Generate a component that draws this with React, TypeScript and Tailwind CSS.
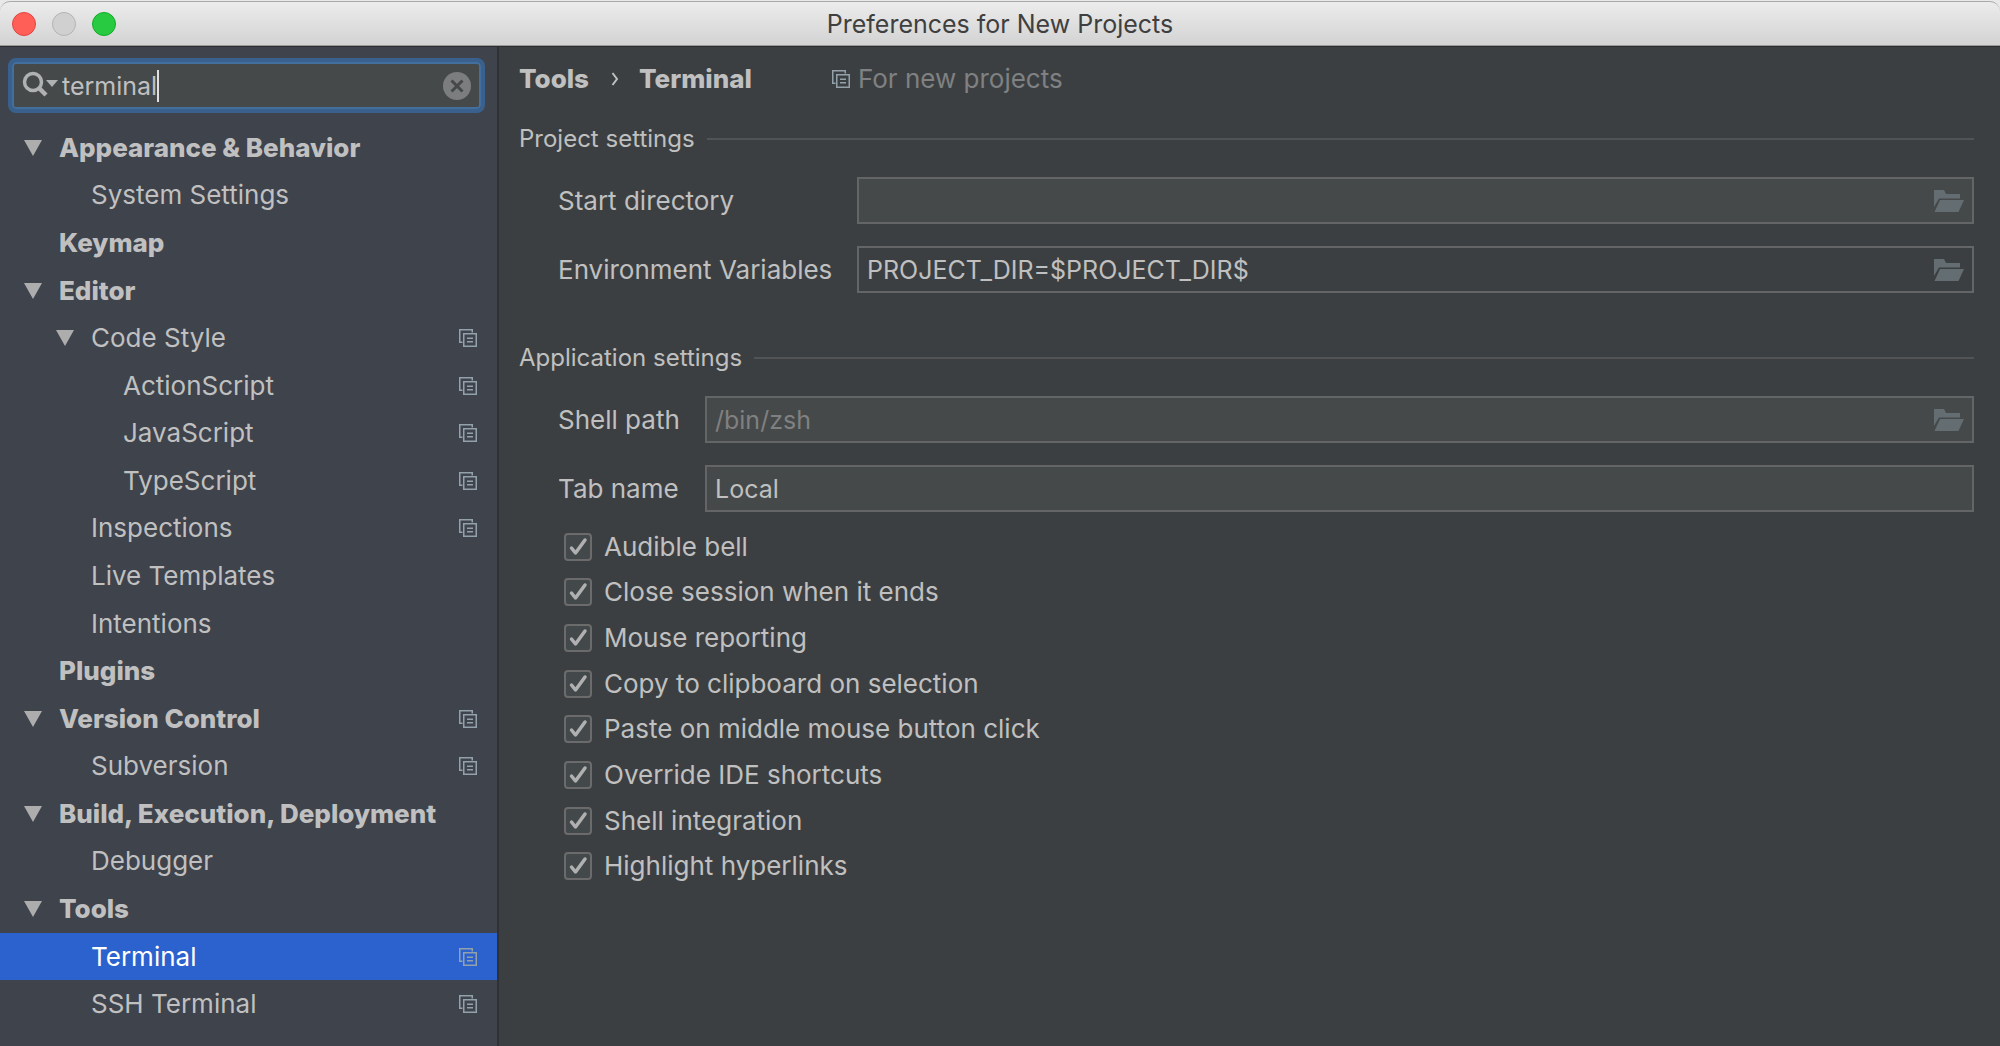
import React, { useState } from 'react';

type Row = { label: string; level: number; open?: boolean; shared?: boolean };

const rows: Row[] = [
  { label: 'Appearance & Behavior', level: 0, open: true },
  { label: 'System Settings', level: 1 },
  { label: 'Keymap', level: 0 },
  { label: 'Editor', level: 0, open: true },
  { label: 'Code Style', level: 1, open: true, shared: true },
  { label: 'ActionScript', level: 2, shared: true },
  { label: 'JavaScript', level: 2, shared: true },
  { label: 'TypeScript', level: 2, shared: true },
  { label: 'Inspections', level: 1, shared: true },
  { label: 'Live Templates', level: 1 },
  { label: 'Intentions', level: 1 },
  { label: 'Plugins', level: 0 },
  { label: 'Version Control', level: 0, open: true, shared: true },
  { label: 'Subversion', level: 1, shared: true },
  { label: 'Build, Execution, Deployment', level: 0, open: true },
  { label: 'Debugger', level: 1 },
  { label: 'Tools', level: 0, open: true },
  { label: 'Terminal', level: 1, shared: true },
  { label: 'SSH Terminal', level: 1, shared: true },
];

const options = [
  'Audible bell',
  'Close session when it ends',
  'Mouse reporting',
  'Copy to clipboard on selection',
  'Paste on middle mouse button click',
  'Override IDE shortcuts',
  'Shell integration',
  'Highlight hyperlinks',
];

const indents = ['pl-6', 'pl-14', 'pl-[88px]'];

function SharedIcon() {
  return (
    <svg className="h-[18px] w-[18px] shrink-0" viewBox="0 0 18 18" fill="none" stroke="#93a1ab" strokeWidth="1.5" aria-hidden="true">
      <path d="M3.5 13.25H.75V.75h12.5v2.75" />
      <path d="M4.75 4.75h12.5v12.5H4.75z" />
      <path d="M8 9.25h6M8 12.75h6" />
    </svg>
  );
}

function FolderIcon() {
  return (
    <svg className="h-[22px] w-[30px]" viewBox="0 0 30 22" fill="#646d71" aria-hidden="true">
      <path d="M0 0h10l2 4h14v4.500H5L0 17z" />
      <path d="M6 10h24l-5.500 12H.5z" />
    </svg>
  );
}

function Section({ title, children }: { title: string; children: React.ReactNode }) {
  return (
    <section>
      <div className="flex items-center gap-3">
        <h2 className="text-2xl leading-8">{title}</h2>
        <div className="h-[2px] flex-1 bg-[#515355]" />
      </div>
      {children}
    </section>
  );
}

function Field(props: {
  id: string;
  label: string;
  labelClass: string;
  value: string;
  placeholder?: string;
  fill: string;
  browse?: boolean;
}) {
  const [value, setValue] = useState(props.value);
  return (
    <div className="flex items-center pl-[39px]">
      <label htmlFor={props.id} className={'shrink-0 ' + props.labelClass}>
        {props.label}
      </label>
      <div className={'flex h-[47px] min-w-0 flex-1 items-center border-2 border-[#646566] px-2 text-[25px] ' + props.fill}>
        <input
          id={props.id}
          type="text"
          value={value}
          placeholder={props.placeholder}
          onChange={(e) => setValue(e.target.value)}
          className="min-w-0 flex-1 bg-transparent outline-none placeholder:text-[#808080]"
        />
        {props.browse && (
          <button type="button" aria-label={'Browse ' + props.label} className="shrink-0">
            <FolderIcon />
          </button>
        )}
      </div>
    </div>
  );
}

export default function App() {
  const [selected, setSelected] = useState('Terminal');
  const [query, setQuery] = useState('terminal');

  return (
    <div className="flex min-h-screen flex-col bg-[#3c3f41] font-['Inter',sans-serif] text-[26px] leading-8 text-[#c0c0c0]">
      <div className="bg-[#e9e9e9] pt-px">
        <header className="grid h-[45px] grid-cols-3 items-center rounded-t-[10px] border-t border-b border-t-[#a9a9a9] border-b-[#9a9a9a] bg-linear-to-b from-[#ececec] to-[#d3d3d3] px-3 pt-px">
          <div className="flex gap-4">
            <button type="button" aria-label="Close" className="size-6 rounded-full border border-[#e2463f] bg-[#ff5f57]" />
            <button type="button" aria-label="Minimize" className="size-6 rounded-full border border-[#b4b4b4] bg-[#d0d0d0]" />
            <button type="button" aria-label="Zoom" className="size-6 rounded-full border border-[#12ac28] bg-[#28ca42]" />
          </div>
          <h1 className="text-center text-[25px] text-[#3f3f3f]">Preferences for New Projects</h1>
        </header>
      </div>

      <div className="flex flex-1">
        <aside className="flex w-[499px] shrink-0 flex-col border-t border-r-2 border-t-[#2b2d30] border-r-[#2f3134] bg-[#3e434c] pb-[18px]">
          <div className="mt-[11px] mr-3 mb-[11px] ml-2 flex h-[55px] items-center rounded-lg border-4 border-[#3a618d] bg-[#45494a] px-[10px] inset-ring-2 inset-ring-[#436f9f]">
            <svg className="mb-1 h-[26px] w-[36px] shrink-0" viewBox="0 0 36 26" aria-hidden="true">
              <circle cx="11" cy="11" r="8.500" fill="none" stroke="#afb1b3" strokeWidth="3.5" />
              <path d="M17 17l7 7" stroke="#afb1b3" strokeWidth="4.5" />
              <path d="M24 9h12l-6 7z" fill="#afb1b3" />
            </svg>
            <div className="relative ml-1 flex min-w-0 flex-1">
              <input
                type="text"
                aria-label="Search settings"
                value={query}
                onChange={(e) => setQuery(e.target.value)}
                className="w-full bg-transparent text-[25px] outline-none"
              />
              <span className="pointer-events-none absolute inset-y-0 left-0 flex text-[25px]">
                <span className="invisible">{query}</span>
                <span className="w-[2px] bg-[#e0e0e0]" />
              </span>
            </div>
            <button type="button" aria-label="Clear search" onClick={() => setQuery('')} className="shrink-0">
              <svg className="size-7" viewBox="0 0 28 28" aria-hidden="true">
                <circle cx="14" cy="14" r="14" fill="#7b7d7e" />
                <path d="M8.500 8.500l11 11M19.500 8.500l-11 11" stroke="#45494a" strokeWidth="3" />
              </svg>
            </button>
          </div>

          <ul className="grid flex-1 auto-rows-fr">
            {rows.map((row) => (
              <li key={row.label} className="flex">
                <button
                  type="button"
                  onClick={() => setSelected(row.label)}
                  className={
                    'flex flex-1 items-center pr-5 text-left ' +
                    indents[row.level] +
                    (row.level === 0 ? ' font-extrabold' : '') +
                    (selected === row.label ? ' bg-[#2b62cd] text-white' : '')
                  }
                >
                  <span className="flex w-[35px] shrink-0">
                    {row.open && (
                      <svg className="h-4 w-[18px]" viewBox="0 0 18 16" fill="#adadad" aria-hidden="true">
                        <path d="M0 0h18L9 16z" />
                      </svg>
                    )}
                  </span>
                  <span className="flex-1">{row.label}</span>
                  {row.shared && <SharedIcon />}
                </button>
              </li>
            ))}
          </ul>
        </aside>

        <main className="min-w-0 flex-1 border-t border-t-[#2b2d30] pr-[26px] pl-5">
          <div className="mt-4 flex items-center">
            <nav aria-label="Breadcrumb" className="flex items-center font-extrabold">
              <a href="#tools">Tools</a>
              <svg className="mr-5 ml-[22px] h-[14px] w-2" viewBox="0 0 8 14" fill="none" stroke="#c0c0c0" strokeWidth="2" aria-hidden="true">
                <path d="M1.500 1l4.500 6-4.500 6" />
              </svg>
              <a href="#terminal">Terminal</a>
            </nav>
            <div className="ml-20 flex items-center gap-2 text-[#7f8182]">
              <SharedIcon />
              <span>For new projects</span>
            </div>
          </div>

          <div className="mt-7">
            <Section title="Project settings">
              <div className="mt-[22px] flex flex-col gap-[22px]">
                <Field id="start" label="Start directory" labelClass="w-[299px]" value="" fill="bg-[#45494a]" browse />
                <Field id="env" label="Environment Variables" labelClass="w-[299px]" value="PROJECT_DIR=$PROJECT_DIR$" fill="" browse />
              </div>
            </Section>
          </div>

          <div className="mt-[49px]">
            <Section title="Application settings">
              <div className="mt-[22px] flex flex-col gap-[22px]">
                <Field id="shell" label="Shell path" labelClass="w-[147px]" value="" placeholder="/bin/zsh" fill="bg-[#45494a]" browse />
                <Field id="tab" label="Tab name" labelClass="w-[147px]" value="Local" fill="bg-[#45494a]" />
              </div>
              <ul className="mt-3 grid min-h-[365px] auto-rows-fr pl-[45px]">
                {options.map((option) => (
                  <li key={option} className="flex items-center">
                    <label className="flex items-center gap-3">
                      <span className="relative flex size-7">
                        <input
                          type="checkbox"
                          defaultChecked
                          className="peer size-7 appearance-none rounded-[4px] border-2 border-[#6b6b6b] bg-[#43494a]"
                        />
                        <svg
                          className="pointer-events-none absolute inset-0 hidden size-7 peer-checked:block"
                          viewBox="0 0 28 28"
                          fill="none"
                          stroke="#b0b0b0"
                          strokeWidth="3.5"
                          strokeLinecap="round"
                          strokeLinejoin="round"
                          aria-hidden="true"
                        >
                          <path d="M7.500 15l4 5L21 7" />
                        </svg>
                      </span>
                      {option}
                    </label>
                  </li>
                ))}
              </ul>
            </Section>
          </div>
        </main>
      </div>
    </div>
  );
}
